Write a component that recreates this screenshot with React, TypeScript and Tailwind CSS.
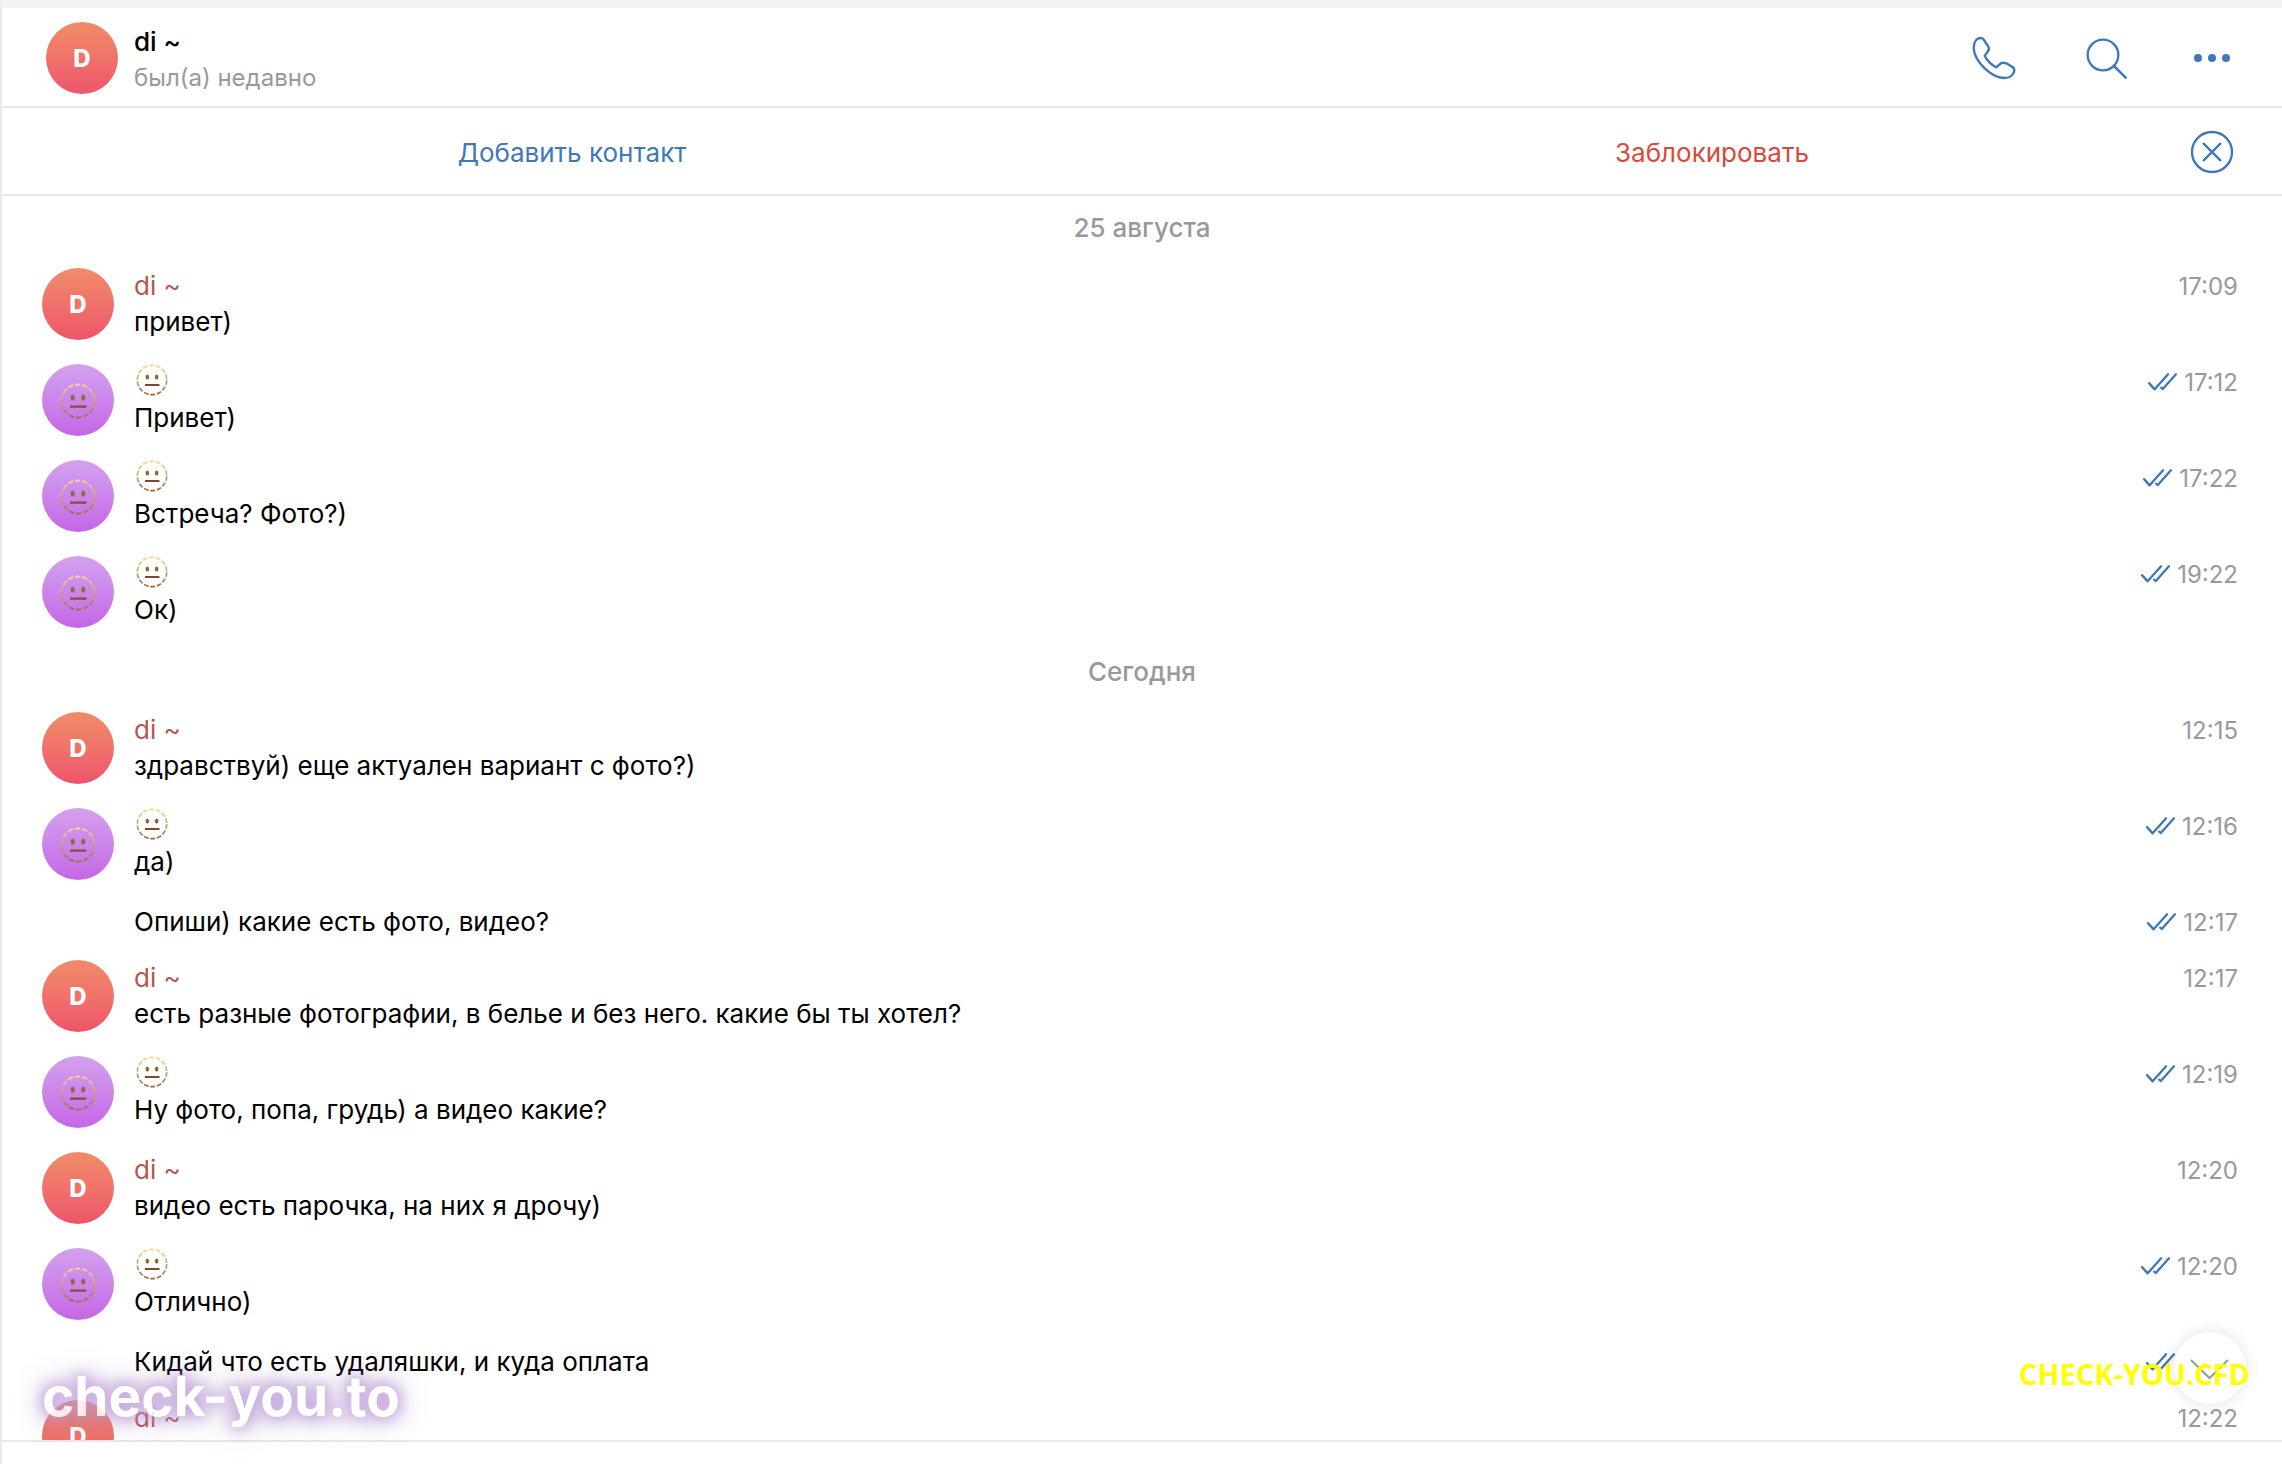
import clsx from "clsx";

interface Message {
  id: number;
  text?: string;
  time: string;
  own?: boolean;
  // Продолжение предыдущего сообщения: без аватара и имени
  continued?: boolean;
}

interface Day {
  title: string;
  messages: Message[];
}

const days: Day[] = [
  {
    title: "25 августа",
    messages: [
      { id: 1, text: "привет)", time: "17:09" },
      { id: 2, text: "Привет)", time: "17:12", own: true },
      { id: 3, text: "Встреча? Фото?)", time: "17:22", own: true },
      { id: 4, text: "Ок)", time: "19:22", own: true },
    ],
  },
  {
    title: "Сегодня",
    messages: [
      {
        id: 5,
        text: "здравствуй) еще актуален вариант с фото?)",
        time: "12:15",
      },
      { id: 6, text: "да)", time: "12:16", own: true },
      {
        id: 7,
        text: "Опиши) какие есть фото, видео?",
        time: "12:17",
        own: true,
        continued: true,
      },
      {
        id: 8,
        text: "есть разные фотографии, в белье и без него. какие бы ты хотел?",
        time: "12:17",
      },
      {
        id: 9,
        text: "Ну фото, попа, грудь) а видео какие?",
        time: "12:19",
        own: true,
      },
      { id: 10, text: "видео есть парочка, на них я дрочу)", time: "12:20" },
      { id: 11, text: "Отлично)", time: "12:20", own: true },
      {
        id: 12,
        text: "Кидай что есть удаляшки, и куда оплата",
        time: "12:21",
        own: true,
        continued: true,
      },
      { id: 13, time: "12:22" },
    ],
  },
];

function FaceIcon({ className }: { className?: string }) {
  return (
    <svg viewBox="0 0 32 32" fill="none" className={className}>
      <defs>
        <linearGradient id="face" x1="0" y1="0" x2="0" y2="1">
          <stop offset="0" stopColor="#f6dc8c" />
          <stop offset="0.5" stopColor="#cfa765" />
          <stop offset="1" stopColor="#946d3c" />
        </linearGradient>
      </defs>
      <circle
        cx="16"
        cy="16"
        r="14.7"
        stroke="url(#face)"
        strokeWidth="1.7"
        strokeDasharray="4.9 1.7"
      />
      <ellipse cx="11.3" cy="13" rx="1.8" ry="2.5" fill="#8f6136" />
      <ellipse cx="20.7" cy="13" rx="1.8" ry="2.5" fill="#8f6136" />
      <path d="M9 21H23.5" stroke="#7a4a2c" strokeWidth="2" />
    </svg>
  );
}

function Avatar({ own }: { own?: boolean }) {
  return (
    <div
      className={clsx(
        "flex size-[72px] shrink-0 items-center justify-center rounded-full bg-linear-to-b pt-0.5 text-2xl font-extrabold text-white",
        own ? "from-[#d3a1ee] to-[#c566e6]" : "from-[#f08c68] to-[#ee546c]",
      )}
    >
      {own ? <FaceIcon className="size-9 opacity-90" /> : "D"}
    </div>
  );
}

function ReadTicks() {
  return (
    <svg
      viewBox="196 360 94 58"
      fill="none"
      stroke="#3e78b8"
      strokeWidth="7"
      strokeLinecap="round"
      strokeLinejoin="round"
      className="mb-1 h-[19px] w-[31px]"
    >
      <path d="M202 394L219 413L260 367" />
      <path d="M239 408L244 412L284 367" />
    </svg>
  );
}

function MessageRow({ message }: { message: Message }) {
  const { text, time, own, continued } = message;

  return (
    <li
      className={clsx(
        "flex items-start gap-5 pr-11 pl-10",
        continued ? "pb-5" : "pb-6",
      )}
    >
      {continued ? <div className="w-[72px] shrink-0" /> : <Avatar own={own} />}
      <div className="min-w-0 flex-1">
        {!continued && (
          <div className="flex h-9 items-center pb-0.5 text-[#b8564f]">
            {own ? <FaceIcon className="mb-0.5 ml-0.5 size-8" /> : "di ~"}
          </div>
        )}
        {text && <p className="leading-9">{text}</p>}
      </div>
      <div className="flex h-9 items-center gap-1.5 pt-0.5 text-2xl text-[#999999]">
        {own && <ReadTicks />}
        <time>{time}</time>
      </div>
    </li>
  );
}

export default function App() {
  return (
    <div className="relative flex h-screen flex-col overflow-hidden border-t-8 border-l-2 border-t-[#f3f3f3] border-l-[#ebebeb] bg-white font-[Inter,sans-serif] text-[26px] text-black">
      <header className="flex h-[100px] shrink-0 items-center gap-4 border-b-2 border-[#e8e8e8] pt-0.5 pr-[46px] pl-11">
        <Avatar />
        <div className="flex-1 pt-1">
          <h1 className="leading-9 font-medium">di ~</h1>
          <p className="text-2xl leading-9 text-[#999999]">был(а) недавно</p>
        </div>
        <div className="flex gap-[60px] text-[#3e78b8]">
          <button type="button" aria-label="Позвонить">
            <svg
              viewBox="216 102 144 144"
              fill="none"
              stroke="currentColor"
              strokeWidth="7"
              strokeLinejoin="round"
              className="size-12 overflow-visible"
            >
              <path d="M243 114C228 114 221 128 221 145C224 186 275 234 315 234C332 234 343 222 343 210C343 204 340 202 334 199L319 190C311 187 302 189 298 194L289 202C277 197 259 181 254 167L262 157C267 151 268 145 265 140L252 120C249 115 247 114 243 114Z" />
            </svg>
          </button>
          <button type="button" aria-label="Поиск">
            <svg
              viewBox="540 102 144 144"
              fill="none"
              stroke="currentColor"
              strokeWidth="7"
              strokeLinecap="round"
              className="size-12"
            >
              <circle cx="609" cy="165" r="46" />
              <path d="M643 199L677 233" strokeWidth="8" />
            </svg>
          </button>
          <button type="button" aria-label="Ещё">
            <svg
              viewBox="864 102 144 144"
              fill="currentColor"
              className="size-12"
            >
              <circle cx="894" cy="174" r="12" />
              <circle cx="936" cy="174" r="12" />
              <circle cx="978" cy="174" r="12" />
            </svg>
          </button>
        </div>
      </header>

      <div className="relative grid h-[88px] shrink-0 grid-cols-2 border-b-2 border-[#e8e8e8]">
        <button type="button" className="pt-0.5 text-[#3e78b8]">
          Добавить контакт
        </button>
        <button type="button" className="pt-0.5 text-[#d9493a]">
          Заблокировать
        </button>
        <button
          type="button"
          aria-label="Закрыть"
          className="absolute top-5 right-[46px] text-[#3e78b8]"
        >
          <svg
            viewBox="864 384 144 144"
            fill="none"
            stroke="currentColor"
            strokeWidth="7"
            strokeLinecap="round"
            className="size-12"
          >
            <circle cx="936" cy="456" r="60" />
            <path d="M911 431L961 481M961 431L911 481" />
          </svg>
        </button>
      </div>

      <main className="relative min-h-0 flex-1 overflow-hidden pt-3">
        {days.map((day) => (
          <section key={day.title}>
            <h2 className="pt-0.5 pb-[22px] text-center leading-9 font-medium text-[#999999]">
              {day.title}
            </h2>
            <ul>
              {day.messages.map((message) => (
                <MessageRow key={message.id} message={message} />
              ))}
            </ul>
          </section>
        ))}
        <button
          type="button"
          aria-label="Вниз"
          className="absolute right-9 bottom-9 flex size-[72px] items-center justify-center rounded-full bg-white shadow-[0_0_16px_rgba(0,0,0,0.12)]"
        >
          <svg
            viewBox="0 0 40 24"
            fill="none"
            stroke="#999999"
            strokeWidth="2"
            className="mt-1 h-6 w-10"
          >
            <path d="M1 2L19.5 20L38 2" />
          </svg>
        </button>
      </main>

      <footer className="h-6 shrink-0 border-t-2 border-[#e8e8e8]" />

      {/* Водяные знаки поверх переписки */}
      <div className="pointer-events-none absolute bottom-10 left-10 text-[55px] leading-none font-bold text-white opacity-85 [text-shadow:0_0_12px_#c09ddd,0_0_16px_#c09ddd,0_0_28px_#8a68a8]">
        check-you.to
      </div>
      <div className="pointer-events-none absolute right-8 bottom-[70px] font-['Open_Sans',sans-serif] text-[29px] leading-10 font-bold text-[#ffff00]">
        CHECK-YOU.CFD
      </div>
    </div>
  );
}
